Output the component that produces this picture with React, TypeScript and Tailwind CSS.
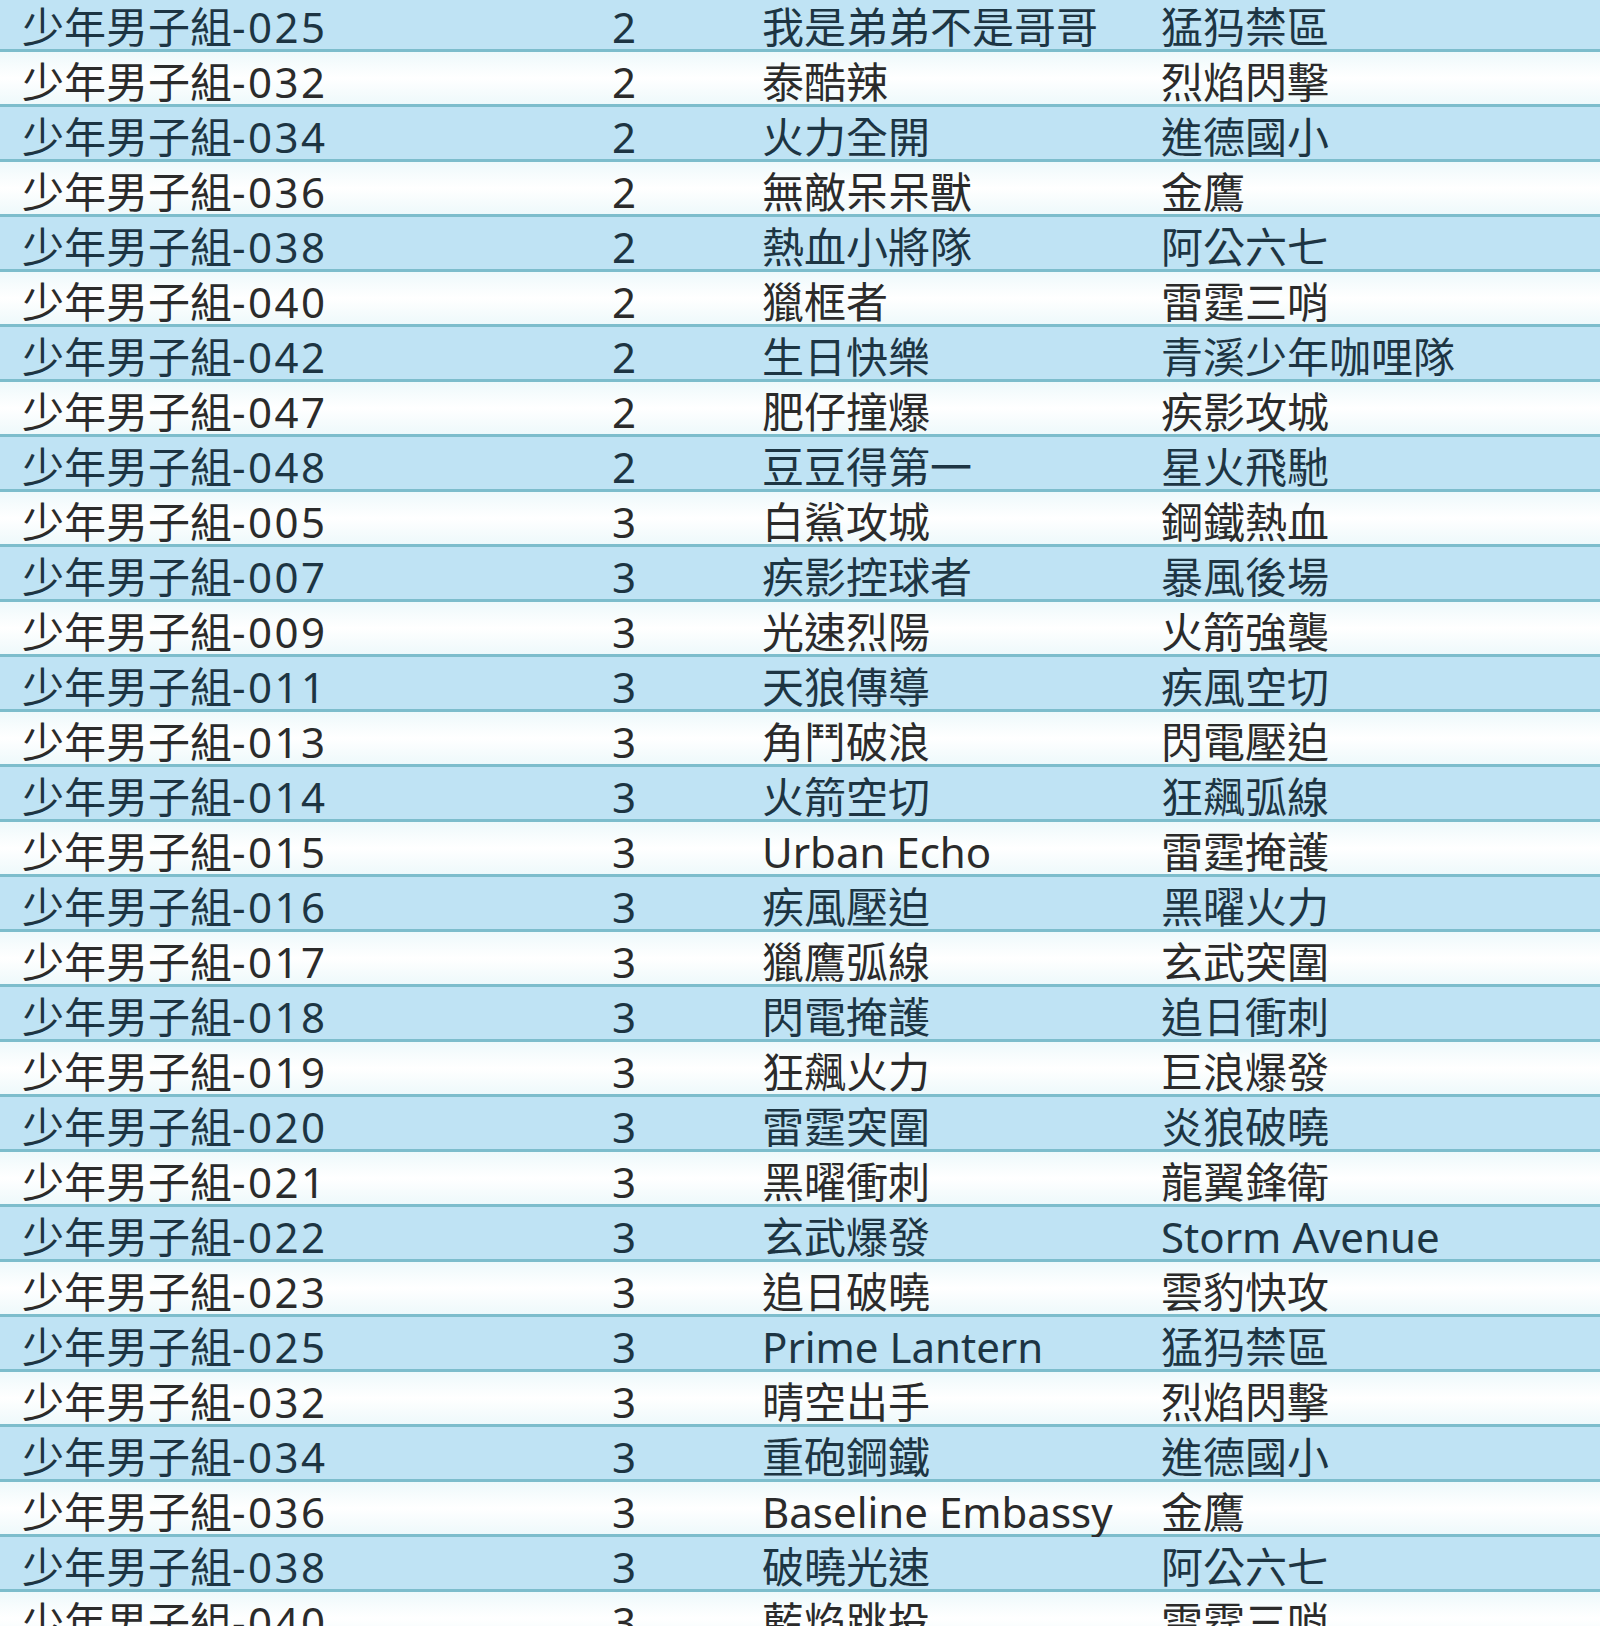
import React from "react";

type Row = [string, string, string, string];

const rows: Row[] = [
  ["少年男子組-025", "2", "我是弟弟不是哥哥", "猛犸禁區"],
  ["少年男子組-032", "2", "泰酷辣", "烈焰閃擊"],
  ["少年男子組-034", "2", "火力全開", "進德國小"],
  ["少年男子組-036", "2", "無敵呆呆獸", "金鷹"],
  ["少年男子組-038", "2", "熱血小將隊", "阿公六七"],
  ["少年男子組-040", "2", "獵框者", "雷霆三哨"],
  ["少年男子組-042", "2", "生日快樂", "青溪少年咖哩隊"],
  ["少年男子組-047", "2", "肥仔撞爆", "疾影攻城"],
  ["少年男子組-048", "2", "豆豆得第一", "星火飛馳"],
  ["少年男子組-005", "3", "白鯊攻城", "鋼鐵熱血"],
  ["少年男子組-007", "3", "疾影控球者", "暴風後場"],
  ["少年男子組-009", "3", "光速烈陽", "火箭強襲"],
  ["少年男子組-011", "3", "天狼傳導", "疾風空切"],
  ["少年男子組-013", "3", "角鬥破浪", "閃電壓迫"],
  ["少年男子組-014", "3", "火箭空切", "狂飆弧線"],
  ["少年男子組-015", "3", "Urban Echo", "雷霆掩護"],
  ["少年男子組-016", "3", "疾風壓迫", "黑曜火力"],
  ["少年男子組-017", "3", "獵鷹弧線", "玄武突圍"],
  ["少年男子組-018", "3", "閃電掩護", "追日衝刺"],
  ["少年男子組-019", "3", "狂飆火力", "巨浪爆發"],
  ["少年男子組-020", "3", "雷霆突圍", "炎狼破曉"],
  ["少年男子組-021", "3", "黑曜衝刺", "龍翼鋒衛"],
  ["少年男子組-022", "3", "玄武爆發", "Storm Avenue"],
  ["少年男子組-023", "3", "追日破曉", "雲豹快攻"],
  ["少年男子組-025", "3", "Prime Lantern", "猛犸禁區"],
  ["少年男子組-032", "3", "晴空出手", "烈焰閃擊"],
  ["少年男子組-034", "3", "重砲鋼鐵", "進德國小"],
  ["少年男子組-036", "3", "Baseline Embassy", "金鷹"],
  ["少年男子組-038", "3", "破曉光速", "阿公六七"],
  ["少年男子組-040", "3", "藍焰跳投", "雷霆三哨"],
];

export default function App() {
  return (
    <div className="w-[1600px] h-[1626px] overflow-hidden bg-white">
      <div className="-mt-[3px] flex flex-col text-[42px] font-[family-name:'Noto_Sans','Noto_Sans_CJK_TC',sans-serif]">
        {rows.map((r, i) => {
          const blue = i % 2 === 0;
          const dash = r[0].indexOf("-");
          const prefix = r[0].slice(0, dash);
          const code = r[0].slice(dash);
          return (
            <div
              key={i}
              className={
                blue
                  ? "grid grid-cols-[590px_150px_399px_1fr] pl-[22px] h-[55px] shrink-0 border-b-[3px] border-[#7dbdcc] bg-[#bfe3f4] text-[#1d3543]"
                  : "grid grid-cols-[590px_150px_399px_1fr] pl-[22px] h-[55px] shrink-0 border-b-[3px] border-[#7dbdcc] bg-linear-to-b from-[#eef9fb] via-white to-[#eef9fb] text-[#2b2b2b]"
              }
            >
              <div className="leading-[40px] pt-[10px] whitespace-nowrap">
                {prefix}
                <span className="tracking-[2.5px]">{code}</span>
              </div>
              <div className="leading-[40px] pt-[10px] whitespace-nowrap">{r[1]}</div>
              <div className="leading-[40px] pt-[10px] whitespace-nowrap">{r[2]}</div>
              <div className="leading-[40px] pt-[10px] whitespace-nowrap">{r[3]}</div>
            </div>
          );
        })}
      </div>
    </div>
  );
}
